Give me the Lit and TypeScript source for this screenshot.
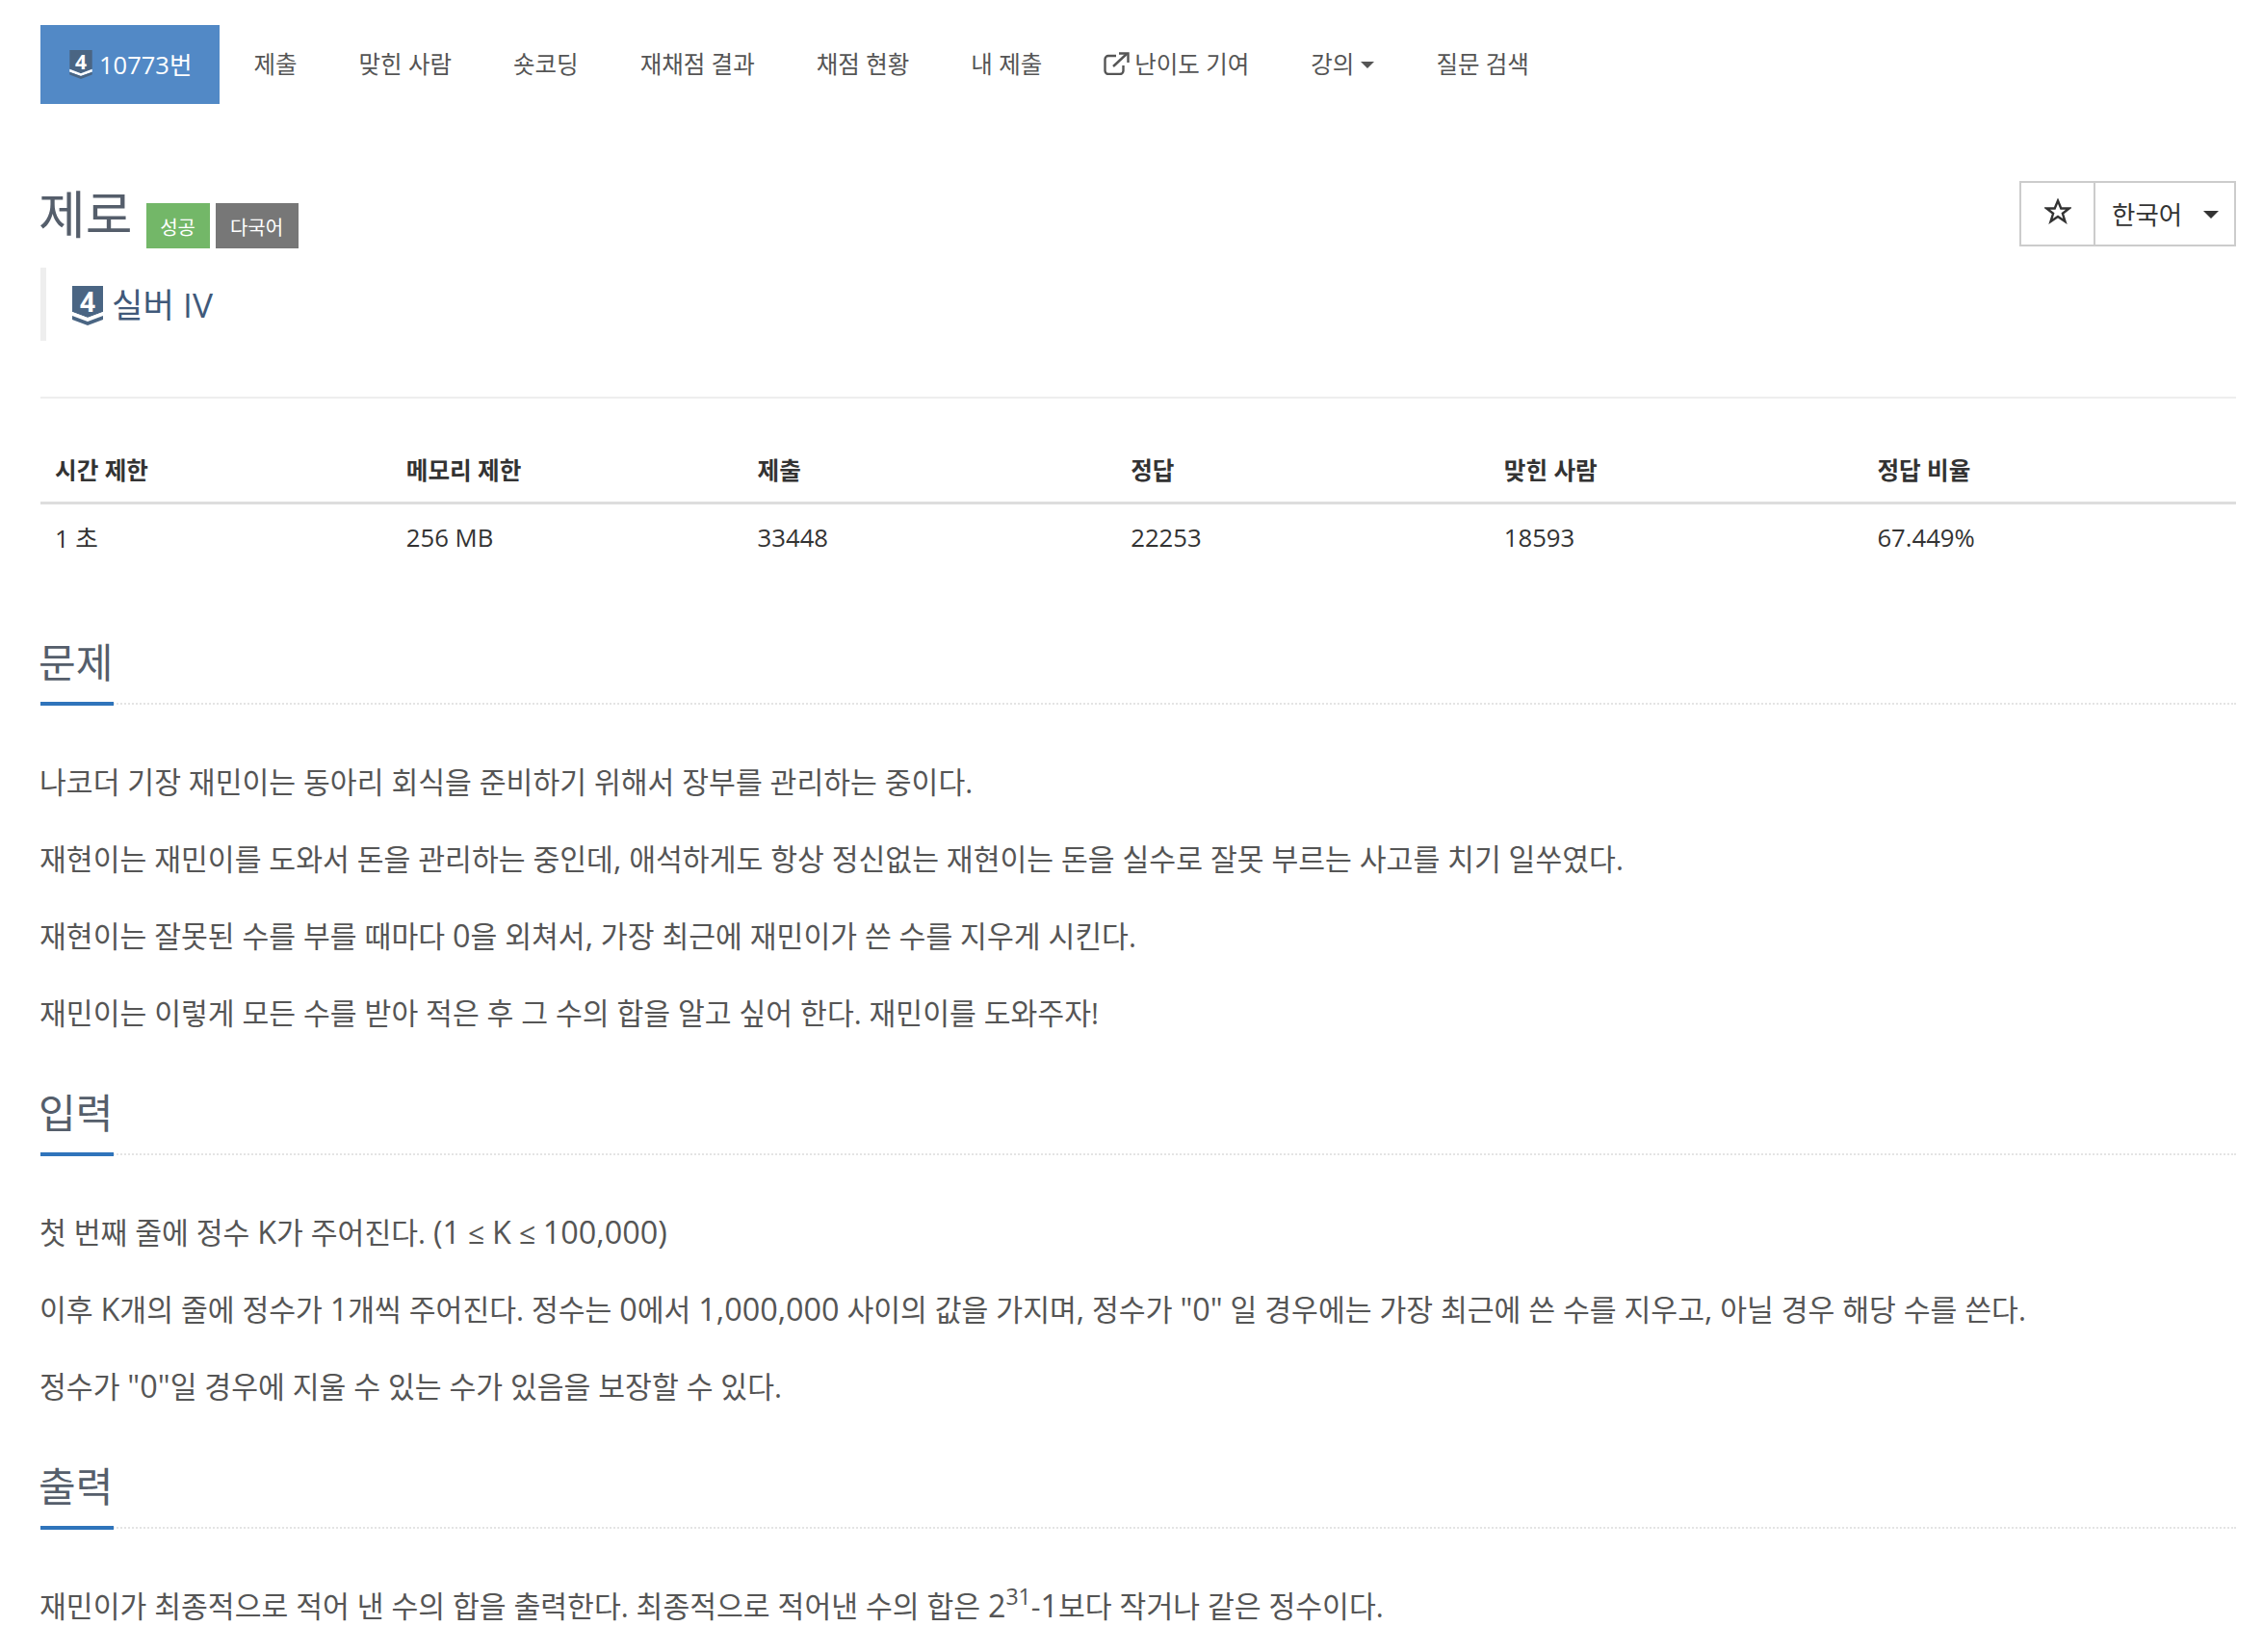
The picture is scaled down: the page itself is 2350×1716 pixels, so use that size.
import { LitElement, html, css } from "lit";
import { customElement } from "lit/decorators.js";

const tier = (size: string, digit: string) => html`<span class="tier ${size}">
  <svg viewBox="0 0 32 41" aria-hidden="true">
    <path d="M0 0H32V27L16 33L0 27Z" fill="#4a6583"/>
    <path d="M0 27L16 33L32 27V31L16 37L0 31Z" fill="#fff"/>
    <path d="M0 31L16 37L32 31V35L16 41L0 35Z" fill="#4a6583"/>
  </svg>
  <span class="digit">${digit}</span>
</span>`;

/* The reference's Latin and digits run larger than its Hangul, so those runs get their own span. */
const runs = (s: string) =>
  s.split(/([0-9A-Za-z"(),]+)/).map((part, i) => (i % 2 ? html`<span class="en">${part}</span>` : part));

@customElement("app-root")
export class AppRoot extends LitElement {
  static styles = css`
    :host { display: block; background: #fff; color: #555; font-family: "Open Sans", "Noto Sans CJK KR", sans-serif; height: 1716px; overflow: hidden; }
    .page { padding: 26px 28px 0 42px; }
    nav { display: flex; height: 82px; font-size: 24.5px; color: #555; }
    nav a { display: flex; align-items: center; padding: 0 32px 3px; gap: 5px; white-space: nowrap; }
    nav a.active { background: #5289c6; color: #fff; padding: 0 29px 3px 30px; gap: 7px; font-size: 25.5px; margin-right: 3px; }
    .tier { position: relative; display: block; flex: none; }
    .tier svg { display: block; width: 100%; height: 100%; }
    .tier.small { width: 24px; height: 30px; margin-top: 3px; }
    .tier.large { width: 32px; height: 41px; margin-top: 6px; }
    .digit { position: absolute; left: 0; right: 0; top: 0; text-align: center; font-family: "Open Sans", sans-serif; font-weight: 700; color: #fff; }
    .small .digit { font-size: 21px; line-height: 25px; }
    .large .digit { font-size: 28px; line-height: 33px; }
    .caret { display: inline-block; width: 0; height: 0; border-left: 7.5px solid transparent; border-right: 7.5px solid transparent; border-top: 7px solid #555; margin-left: 2px; margin-top: 4px; }
    .title-row { display: flex; justify-content: space-between; margin-top: 80px; height: 90px; }
    .title { display: flex; align-items: flex-end; height: 70px; }
    h1 { margin: 0 0 0 -2px; font-size: 53px; font-weight: 400; color: #555e6b; line-height: 70px; }
    .label { display: flex; align-items: center; justify-content: center; height: 47px; color: #fff; font-size: 20px; padding-top: 2px; box-sizing: border-box; }
    .label.green { background: #73b768; width: 66px; margin-left: 14px; }
    .label.gray { background: #777; width: 86px; margin-left: 6px; }
    .btns { display: flex; height: 68px; border: 2px solid #ccc; box-sizing: border-box; color: #333; }
    .star { width: 75px; display: flex; align-items: center; justify-content: center; border-right: 2px solid #ccc; padding-bottom: 5px; box-sizing: content-box; }
    .lang { width: 144px; box-sizing: border-box; padding: 0 16px 2px 17px; display: flex; align-items: center; justify-content: space-between; font-size: 26.5px; }
    .lang .caret { border-top-color: #333; border-left-width: 8px; border-right-width: 8px; border-top-width: 8px; margin-left: 0; }
    .tier-row { display: flex; align-items: center; gap: 9px; border-left: 6px solid #eee; height: 76px; padding-left: 27px; padding-bottom: 4px; box-sizing: border-box; font-size: 35.3px; color: #40597a; }
    hr { border: 0; border-top: 2px solid #eee; margin: 58px 0 0; }
    table { width: 100%; table-layout: fixed; border-collapse: collapse; margin: 35px 0 68px; font-size: 25.7px; color: #333; }
    .c16 { width: 16%; }
    .c17 { width: 17%; }
    th { text-align: left; font-weight: 700; font-size: 24.6px; padding: 5px 15px 0; height: 73px; box-sizing: border-box; border-bottom: 3px solid #ddd; }
    td { padding: 3px 15px 0; height: 68px; box-sizing: border-box; }
    section + section { margin-top: 33px; }
    h2 { margin: 0; position: relative; font-size: 42px; font-weight: 400; color: #555e6b; height: 72px; line-height: 60px; text-indent: -2px; border-bottom: 2px dotted #e4e4e4; }
    h2::after { content: ""; position: absolute; left: 0; bottom: -3px; width: 76px; height: 4px; background: #2f74bb; }
    p { margin: 0 0 0 -1px; font-size: 30.25px; line-height: 80px; color: #555; white-space: nowrap; }
    .en { font-size: 1.07em; line-height: 1; }
    .ps { padding-top: 41px; }
    sup { font-size: 23px; line-height: 0; vertical-align: baseline; position: relative; top: -13px; }
  `;

  render() {
    return html`<div class="page">
      <nav>
        <a class="active">${tier("small", "4")}<span>10773번</span></a>
        <a>제출</a><a>맞힌 사람</a><a>숏코딩</a><a>재채점 결과</a><a>채점 현황</a><a>내 제출</a>
        <a><svg width="27" height="24" viewBox="0 0 27 24" fill="none" stroke="#555" stroke-width="2.4"><path d="M13 4H5a3.5 3.5 0 0 0-3.5 3.5v12A3.5 3.5 0 0 0 5 23h12a3.5 3.5 0 0 0 3.5-3.500V14"/><path d="M10 15L24 2"/><path d="M16 1.500h9.500V11"/></svg><span>난이도 기여</span></a>
        <a>강의<i class="caret"></i></a>
        <a>질문 검색</a>
      </nav>
      <div class="title-row">
        <div class="title"><h1>제로</h1><span class="label green">성공</span><span class="label gray">다국어</span></div>
        <div class="btns">
          <div class="star"><svg width="28" height="27" viewBox="0 0 28 27" fill="none" stroke="#333" stroke-width="2.4"><path d="M14 2.500l3.300 8h8.400l-6.800 5.300 2.600 8.300L14 19l-7.500 5.100 2.600-8.300-6.800-5.300h8.400z"/></svg></div>
          <div class="lang"><span>한국어</span><i class="caret"></i></div>
        </div>
      </div>
      <div class="tier-row">${tier("large", "4")}<span>실버 IV</span></div>
      <hr />
      <table>
        <colgroup><col class="c16"/><col class="c16"/><col class="c17"/><col class="c17"/><col class="c17"/><col class="c17"/></colgroup>
        <thead><tr><th>시간 제한</th><th>메모리 제한</th><th>제출</th><th>정답</th><th>맞힌 사람</th><th>정답 비율</th></tr></thead>
        <tbody><tr><td>1 초</td><td>256 MB</td><td>33448</td><td>22253</td><td>18593</td><td>67.449%</td></tr></tbody>
      </table>
      <section>
        <h2>문제</h2>
        <div class="ps">
          <p>나코더 기장 재민이는 동아리 회식을 준비하기 위해서 장부를 관리하는 중이다.</p>
          <p>${runs('재현이는 재민이를 도와서 돈을 관리하는 중인데, 애석하게도 항상 정신없는 재현이는 돈을 실수로 잘못 부르는 사고를 치기 일쑤였다.')}</p>
          <p>${runs('재현이는 잘못된 수를 부를 때마다 0을 외쳐서, 가장 최근에 재민이가 쓴 수를 지우게 시킨다.')}</p>
          <p>재민이는 이렇게 모든 수를 받아 적은 후 그 수의 합을 알고 싶어 한다. 재민이를 도와주자!</p>
        </div>
      </section>
      <section>
        <h2>입력</h2>
        <div class="ps">
          <p>${runs('첫 번째 줄에 정수 K가 주어진다. (1 ≤ K ≤ 100,000)')}</p>
          <p>${runs('이후 K개의 줄에 정수가 1개씩 주어진다. 정수는 0에서 1,000,000 사이의 값을 가지며, 정수가 "0" 일 경우에는 가장 최근에 쓴 수를 지우고, 아닐 경우 해당 수를 쓴다.')}</p>
          <p>${runs('정수가 "0"일 경우에 지울 수 있는 수가 있음을 보장할 수 있다.')}</p>
        </div>
      </section>
      <section>
        <h2>출력</h2>
        <div class="ps">
          <p>${runs('재민이가 최종적으로 적어 낸 수의 합을 출력한다. 최종적으로 적어낸 수의 합은 2')}<sup>31</sup>${runs('-1보다 작거나 같은 정수이다.')}</p>
        </div>
      </section>
    </div>`;
  }
}
